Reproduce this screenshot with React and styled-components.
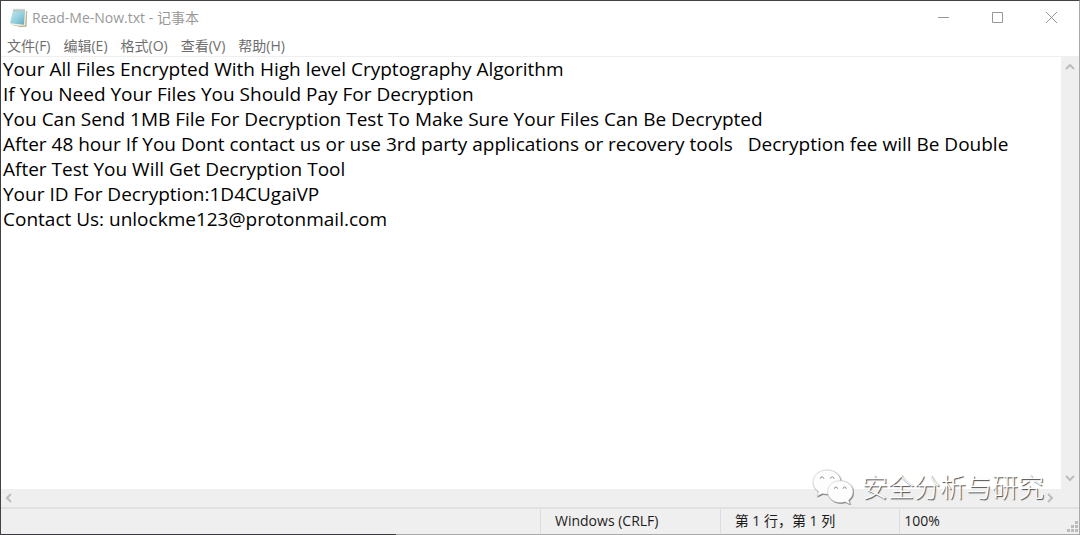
import React from "react";
import styled, { createGlobalStyle } from "styled-components";

const GlobalStyle = createGlobalStyle`
  * { box-sizing: border-box; }
  body {
    margin: 0;
    background: #fff;
    font-family: "Open Sans", "Noto Sans CJK SC", sans-serif;
  }
  button { font: inherit; color: inherit; background: none; border: 0; padding: 0; margin: 0; }
`;

const Window = styled.div`
  position: relative;
  display: flex;
  flex-direction: column;
  min-height: 100vh;
  border: 1px solid #434145;
  border-right-color: #a9a9a9;
  border-bottom: 0;
  background: #fff;
`;

const WindowEdge = styled.div`
  height: 1px;
  background: linear-gradient(90deg, #3b393d 395px, #a9a9a9 395px);
`;

const TitleBar = styled.header`
  display: flex;
  align-items: center;
  height: 33px;
  padding: 0 1px 0 8px;
`;

const Title = styled.h1`
  flex: 1;
  margin: 0 0 0 4px;
  font-size: 14px;
  line-height: 20px;
  font-weight: 400;
  color: #999;
`;

const Caption = styled.button`
  display: grid;
  place-items: center;
  width: 54px;
  height: 32px;
  color: #979797;
`;

const MenuBar = styled.nav`
  display: flex;
  gap: 13px;
  height: 23px;
  padding: 0 6px;
  border-bottom: 1px solid #efefef;
`;

const MenuItem = styled.button`
  font-size: 14px;
  line-height: 24px;
  color: #6e6e6e;
`;

const Editor = styled.main`
  flex: 1;
  display: grid;
  grid-template-columns: minmax(0, 1fr) 18px;
  grid-template-rows: minmax(0, 1fr) 18px;
  background: #efefef;
`;

const Text = styled.textarea`
  display: block;
  width: 100%;
  height: 100%;
  margin: 0;
  padding: 0 2px;
  border: 0;
  outline: 0;
  resize: none;
  overflow: hidden;
  white-space: pre;
  background: #fff;
  color: #000;
  font-family: "Open Sans", "Noto Sans CJK SC", sans-serif;
  font-size: 19px;
  line-height: 25px;
`;

const ScrollBar = styled.div`
  display: flex;
  flex-direction: ${(p) => (p.$vertical ? "column" : "row")};
  justify-content: space-between;
  padding: ${(p) => (p.$vertical ? "2px 0" : "0 3px 0 0")};
`;

const ScrollButton = styled.button`
  display: grid;
  place-items: center;
  width: 18px;
  height: 18px;
  color: #bdbdbd;
`;

const StatusBar = styled.footer`
  display: grid;
  grid-template-columns: 3fr 1fr 1fr 1fr;
  height: 27px;
  padding-bottom: 1px;
  border-top: 2px solid #e1e1e1;
  background: #efefef;
`;

const StatusCell = styled.div`
  display: flex;
  align-items: center;
  justify-content: space-between;
  padding-left: ${(p) => (p.$tight ? "4px" : "14px")};
  border-left: ${(p) => (p.$first ? "0" : "1px solid #dcdcdc")};
  font-size: 14px;
  line-height: 20px;
  color: #1c1c1c;
`;

const Grip = styled.svg`
  align-self: flex-end;
  margin: 0 1px 1px 0;
`;

const Watermark = styled.div`
  position: absolute;
  right: 35px;
  bottom: 30px;
  display: flex;
  align-items: center;
  gap: 8px;
  pointer-events: none;
  color: #fff;
  font-size: 26px;
  font-weight: 300;
  line-height: 36px;
  text-shadow: 1px 1px 1px #444;
`;

const note = [
  "Your All Files Encrypted With High level Cryptography Algorithm",
  "If You Need Your Files You Should Pay For Decryption",
  "You Can Send 1MB File For Decryption Test To Make Sure Your Files Can Be Decrypted",
  "After 48 hour If You Dont contact us or use 3rd party applications or recovery tools   Decryption fee will Be Double",
  "After Test You Will Get Decryption Tool",
  "Your ID For Decryption:1D4CUgaiVP",
  "Contact Us: unlockme123@protonmail.com",
].join("\n");

const menus = ["文件(F)", "编辑(E)", "格式(O)", "查看(V)", "帮助(H)"];

const captions = [
  { label: "最小化", d: "M0 5.5H11" },
  { label: "最大化", d: "M.5 .5H10.5V10.5H.5Z" },
  { label: "关闭", d: "M0 0L11 11M11 0L0 11" },
];

const arrows = {
  up: "M1 6L5 2L9 6",
  down: "M1 3L5 7L9 3",
  left: "M6 1L2 5L6 9",
  right: "M4 1L8 5L4 9",
};

function Arrow({ dir, label }) {
  return (
    <ScrollButton aria-label={label}>
      <svg width="10" height="10" viewBox="0 0 10 10" fill="none" stroke="currentColor" strokeWidth="2">
        <path d={arrows[dir]} />
      </svg>
    </ScrollButton>
  );
}

function NotepadIcon() {
  return (
    <svg width="19" height="20" viewBox="0 0 19 20" aria-hidden="true">
      <defs>
        <linearGradient id="cover" x1="0" y1="0" x2="1" y2="1">
          <stop offset="0" stopColor="#c4e9f0" />
          <stop offset=".55" stopColor="#93cfdd" />
          <stop offset="1" stopColor="#5fa9bd" />
        </linearGradient>
      </defs>
      <path d="M6 2.500L18.200 3L17.600 18.800L12 19.200L3 17Z" fill="#c2b696" />
      <path d="M5 2.500L17.200 2.800L16 17.600L10 17.800L2 16.500Z" fill="#f4f2e8" />
      <path d="M4 2H16L15 16.800L1 15.300Z" fill="url(#cover)" />
      <path d="M4 2H16L15.900 3.600H3.700Z" fill="#d7e6e8" />
      <path d="M5 .8V3.500M7 .8V3.500M9 .8V3.500M11 .8V3.500M13 .8V3.500M15 .8V3.500" stroke="#8b989b" strokeWidth=".8" />
    </svg>
  );
}

function ChatLogo() {
  return (
    <svg width="42" height="36" viewBox="0 0 43 37" aria-hidden="true">
      <defs>
        <filter id="relief" x="-10%" y="-10%" width="125%" height="125%">
          <feDropShadow dx=".7" dy=".8" stdDeviation=".4" floodColor="#444" floodOpacity=".9" />
        </filter>
      </defs>
      <g filter="url(#relief)" fill="#fdfdfd" stroke="#b8b8b8" strokeWidth=".5">
        <path d="M15.500 1C7 1 1 6.500 1 13.500C1 17.600 3.200 21 6.700 23.300L5 28L10.700 25.200C12.300 25.600 13.900 25.800 15.800 25.800C23.500 25.800 29.500 20.500 29.500 13.500C29.500 6.500 23.500 1 15.500 1Z" />
        <path d="M29 12C21.500 12 16 17 16 23.200C16 29.500 21.500 34.500 29 34.500C30.800 34.500 32.300 34.200 33.800 33.700L39 36.200L37.500 32C40.500 29.800 42 26.800 42 23.200C42 17 36.500 12 29 12Z" />
      </g>
      <g fill="none" stroke="#8c8c8c" strokeWidth="1">
        <path d="M8.500 10V9.500A1.800 1.800 0 0 1 12 9.500V10M19 10V9.500A1.800 1.800 0 0 1 22.500 9.500V10" />
        <path d="M23 20.500V20A1.500 1.500 0 0 1 26 20V20.500M32 20.500V20A1.500 1.500 0 0 1 35 20V20.500" />
      </g>
    </svg>
  );
}

export default function App() {
  return (
    <>
      <GlobalStyle />
      <Window>
        <TitleBar>
          <NotepadIcon />
          <Title>Read-Me-Now.txt - 记事本</Title>
          {captions.map((c) => (
            <Caption key={c.label} aria-label={c.label}>
              <svg width="11" height="11" viewBox="0 0 11 11" fill="none" stroke="currentColor">
                <path d={c.d} />
              </svg>
            </Caption>
          ))}
        </TitleBar>
        <MenuBar>
          {menus.map((m) => (
            <MenuItem key={m}>{m}</MenuItem>
          ))}
        </MenuBar>
        <Editor>
          <Text aria-label="Read-Me-Now.txt" defaultValue={note} spellCheck={false} />
          <ScrollBar $vertical>
            <Arrow dir="up" label="向上滚动" />
            <Arrow dir="down" label="向下滚动" />
          </ScrollBar>
          <ScrollBar>
            <Arrow dir="left" label="向左滚动" />
            <Arrow dir="right" label="向右滚动" />
          </ScrollBar>
        </Editor>
        <StatusBar>
          <StatusCell $first />
          <StatusCell>Windows (CRLF)</StatusCell>
          <StatusCell>第 1 行，第 1 列</StatusCell>
          <StatusCell $tight>
            100%
            <Grip width="11" height="11" viewBox="0 0 11 11" fill="#bcbcbc" aria-hidden="true">
              <path d="M8 0h3v3h-3zM4 4h3v3h-3zM8 4h3v3h-3zM0 8h3v3h-3zM4 8h3v3h-3zM8 8h3v3h-3z" />
            </Grip>
          </StatusCell>
        </StatusBar>
        <WindowEdge />
        <Watermark>
          <ChatLogo />
          安全分析与研究
        </Watermark>
      </Window>
    </>
  );
}
